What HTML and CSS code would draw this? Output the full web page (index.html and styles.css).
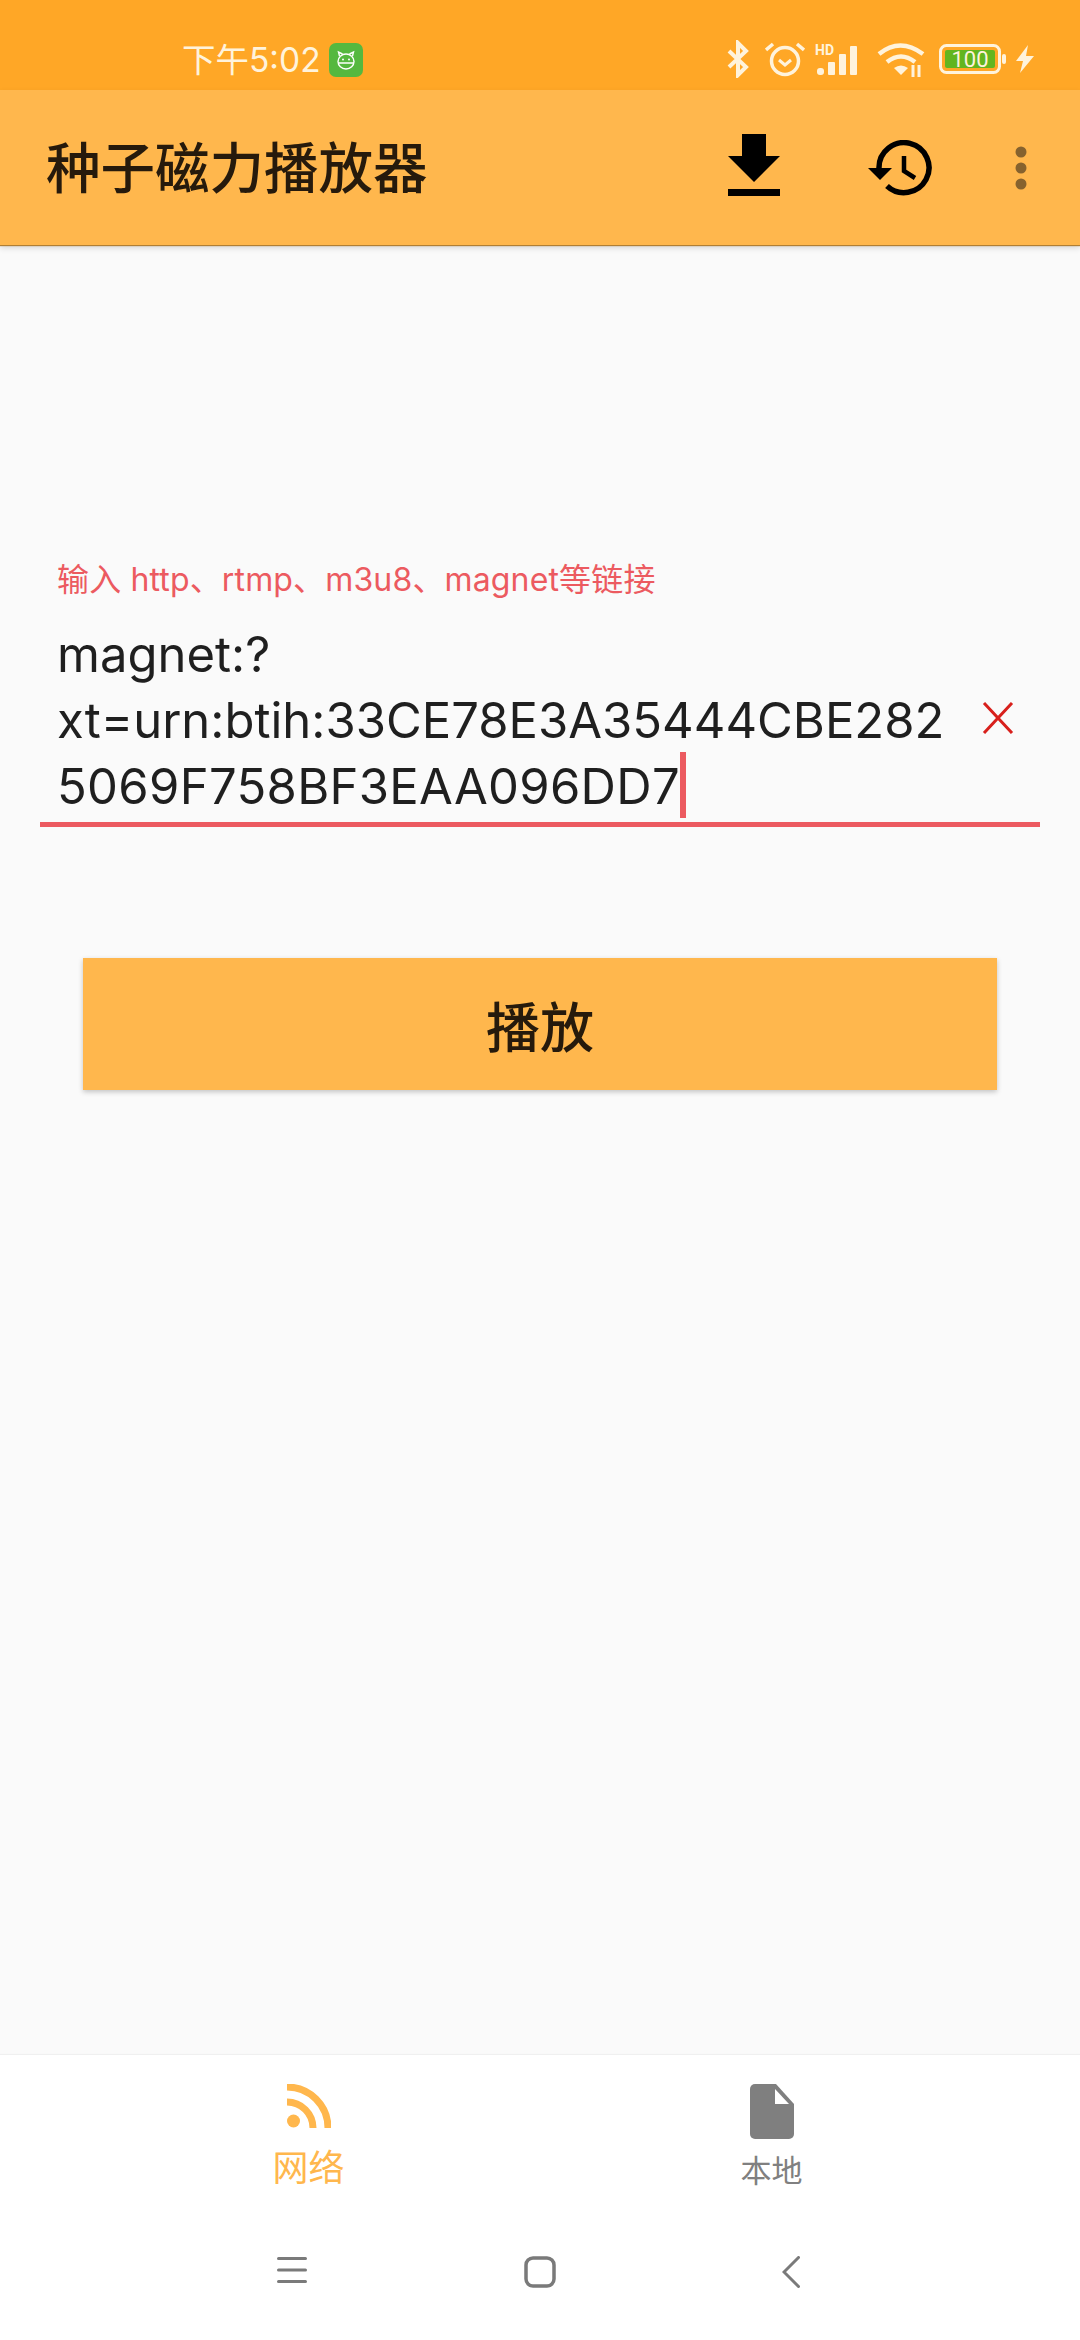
FILE: index.html
```html
<!DOCTYPE html>
<html lang="zh-CN">
<head>
<meta charset="utf-8">
<title>种子磁力播放器</title>
<link rel="stylesheet" href="styles.css">
</head>
<body>
<div class="screen">
  <header class="statusbar">
    <div class="status-left">
      <span class="time">下午5:02</span>
      <svg class="badge" width="34" height="34" viewBox="0 0 34 34"><rect width="34" height="34" rx="7" fill="#55B83F"/><g fill="none" stroke="#fff" stroke-width="1.4"><ellipse cx="17" cy="18.500" rx="8" ry="7.500"/><path d="M10.500 13l-1-4 4 2M23.500 13l1-4-4 2M9.500 20h15"/></g><circle cx="14" cy="16.500" r="1" fill="#fff"/><circle cx="20" cy="16.500" r="1" fill="#fff"/></svg>
    </div>
    <div class="status-right">
      <svg width="24" height="38" viewBox="0 0 24 38"><path d="M3 11l17 16-8 8V3l8 8L3 27" fill="none" stroke="#FFF3DC" stroke-width="4"/></svg>
      <svg class="s-alarm" width="40" height="36" viewBox="0 0 40 36"><g fill="none" stroke="#FFF3DC"><circle cx="20" cy="20" r="13.500" stroke-width="3.500"/><path d="M14 19l6 5 6-5" stroke-width="3"/><path d="M1 9l7-6M39 9l-7-6" stroke-width="3.500"/></g></svg>
      <svg class="s-signal" width="50" height="32" viewBox="0 0 50 32"><text x="0" y="12" class="hd">HD</text><g fill="#FFF3DC"><rect x="2" y="25" width="7" height="7" rx="3"/><rect x="13" y="19" width="7" height="13" rx="1"/><rect x="24" y="11" width="7" height="21" rx="1"/><rect x="35" y="3" width="7" height="29" rx="1"/></g></svg>
      <svg class="s-wifi" width="48" height="36" viewBox="0 0 48 36"><g fill="none" stroke="#FFF3DC" stroke-width="4.500"><path d="M2 13q21-17 44 0"/><path d="M10 21q14-11 28 0"/></g><path d="M17 27q7-5 14 0l-7 7z" fill="#FFF3DC"/><path d="M36 24v12M42 24v12" stroke="#FFF3DC" stroke-width="3"/></svg>
      <svg class="s-batt" width="68" height="30" viewBox="0 0 68 30"><rect x="1.500" y="1.500" width="59" height="27" rx="6" fill="none" stroke="#FFF3DC" stroke-width="3"/><rect x="6" y="6" width="50" height="18" rx="2" fill="#62B51F"/><rect x="63" y="10" width="4" height="10" rx="2" fill="#FFF3DC"/><text x="31" y="22.500" class="batt">100</text></svg>
      <svg class="s-bolt" width="20" height="28" viewBox="0 0 20 28"><path d="M13 0L1 16h7l-3 12L19 11h-8z" fill="#FFF3DC"/></svg>
    </div>
  </header>

  <div class="appbar">
    <h1 class="title">种子磁力播放器</h1>
    <div class="actions">
      <svg class="a-download" width="52" height="62" viewBox="0 0 52 62"><path d="M14 0h24v22h14L26 48 0 22h14zM0 55h52v7H0z"/></svg>
      <svg width="64" height="56" viewBox="0 0 64 56"><path d="M11 28A25 25 0 1 1 19 46" fill="none" stroke="#000" stroke-width="5.500"/><path d="M0 28h24L12 40z"/><path d="M36 16v15l11 7" fill="none" stroke="#000" stroke-width="4.500"/></svg>
      <svg class="a-more" width="12" height="44" viewBox="0 0 12 44"><g fill="#86622E"><circle cx="6" cy="6" r="5.500"/><circle cx="6" cy="22" r="5.500"/><circle cx="6" cy="38" r="5.500"/></g></svg>
    </div>
  </div>

  <main class="content">
    <label class="hint">输入 http、rtmp、m3u8、magnet等链接</label>
    <div class="field">
      <div class="value">
        <div>magnet:?</div>
        <div>xt=urn:btih:33CE78E3A35444CBE282</div>
        <div class="last">5069F758BF3EAA096DD7<span class="caret"></span></div>
      </div>
      <svg class="clear" width="32" height="32" viewBox="0 0 32 32"><path d="M2 1l28 30M30 1L2 31" stroke="#D8201C" stroke-width="3" fill="none"/></svg>
    </div>
    <button class="play">播放</button>
  </main>

  <nav class="tabs">
    <div class="tab active">
      <svg width="44" height="44" viewBox="0 0 44 44"><circle cx="6.500" cy="37" r="6.500" fill="#FFB74D"/><path d="M0 18a26 26 0 0 1 26 26M0 3a41 41 0 0 1 41 41" fill="none" stroke="#FFB74D" stroke-width="7"/></svg>
      <span>网络</span>
    </div>
    <div class="tab">
      <svg width="44" height="55" viewBox="0 0 44 55"><path d="M5 0h21l18 20v30a5 5 0 0 1-5 5H5a5 5 0 0 1-5-5V5a5 5 0 0 1 5-5z" fill="#7F7F7F"/><path d="M25 5l14 15H25z" fill="#fff"/></svg>
      <span>本地</span>
    </div>
  </nav>

  <footer class="navbar">
    <svg width="30" height="28" viewBox="0 0 30 28"><path d="M1.500 2.500h27M1.500 14h27M1.500 25.500h27" stroke="#7A7A7A" stroke-width="3" stroke-linecap="round"/></svg>
    <svg class="n-home" width="32" height="32" viewBox="0 0 32 32"><rect x="2" y="2" width="28" height="28" rx="7" fill="none" stroke="#7A7A7A" stroke-width="3.500"/></svg>
    <svg class="n-back" width="18" height="32" viewBox="0 0 18 32"><path d="M16.500 1.500L2 16l14.500 14.500" fill="none" stroke="#7A7A7A" stroke-width="3" stroke-linecap="round"/></svg>
  </footer>
</div>
</body>
</html>
```

FILE: styles.css
```css
* { box-sizing: border-box; }
html, body { margin: 0; padding: 0; }
body { font-family: "Inter", "Noto Sans CJK SC", sans-serif; background: #FAFAFA; }
.screen { width: 1080px; height: 2340px; display: flex; flex-direction: column; overflow: hidden; }

.statusbar { height: 90px; flex: none; background: #FFA726; display: flex; justify-content: space-between; align-items: flex-start; padding: 40px 45px 0 182px; color: #FFF3DC; }
.status-left { display: flex; align-items: center; gap: 9px; margin-top: 2px; }
.time { font-size: 33.5px; line-height: 36px; }
.badge { display: block; margin-left: -1px; }
.status-right { display: flex; align-items: center; }
.status-right svg { display: block; flex: none; }
.s-alarm { margin-left: 15px; }
.s-signal { margin-left: 10px; }
.s-wifi { margin-left: 12px; }
.s-batt { margin-left: 14px; }
.s-bolt { margin-left: 8px; }
.hd { font: 700 14px "Roboto", sans-serif; fill: #FFF3DC; }
.batt { font: 400 22px "Roboto", sans-serif; fill: #FFF3DC; text-anchor: middle; }

.appbar { height: 155px; flex: none; background: #FFB74D; display: flex; justify-content: space-between; align-items: center; padding: 0 53px 0 46px; box-shadow: 0 1px 1px #B07F35, 0 3px 6px rgba(0,0,0,.14); position: relative; z-index: 1; }
.title { margin: -6px 0 0; font-size: 54.5px; font-weight: 500; line-height: 64px; color: #261A0C; font-family: "Noto Sans CJK SC", sans-serif; }
.actions { display: flex; align-items: center; gap: 88px; }
.actions svg { display: block; flex: none; }
.a-download { margin-top: -5px; }
.a-more { margin-left: -5px; }

.content { flex: 1; display: flex; flex-direction: column; padding: 315px 40px 0; }
.hint { color: #EC5A60; font-size: 32px; line-height: 40px; padding-left: 17px; letter-spacing: .15px; }
.field { display: flex; align-items: flex-start; justify-content: space-between; border-bottom: 5px solid #EC5A60; margin-top: 8px; padding: 14px 26px 0 17px; height: 219px; }
.value { font-size: 49px; line-height: 66px; color: #1F1F1F; white-space: nowrap; }
.last { letter-spacing: .3px; }
.caret { display: inline-block; width: 6px; height: 66px; background: #EC5A60; vertical-align: top; margin-top: -2px; }
.clear { display: block; flex: none; margin-top: 80px; }
.play { display: block; margin: 131px 43px 0; height: 132px; border: 0; border-radius: 0; background: #FFB74D; box-shadow: 0 2px 5px rgba(0,0,0,.22); color: #261A0C; font-size: 54px; font-weight: 500; font-family: "Noto Sans CJK SC", sans-serif; }

.tabs { height: 165px; flex: none; background: #fff; display: flex; padding: 29px 0 0 0; box-shadow: 0 -1px 1px rgba(0,0,0,.04); justify-content: flex-start; }
.tab { display: flex; flex-direction: column; align-items: center; width: 463px; color: #808080; font-size: 31px; line-height: 40px; gap: 12px; }
.tab:first-child { margin-left: 77px; }
.tab svg { display: block; }
.tab.active { color: #FFB74D; font-size: 36px; line-height: 44px; gap: 18px; }

.navbar { height: 120px; flex: none; background: #fff; display: flex; align-items: flex-start; padding: 36px 0 0 277px; }
.navbar svg { display: block; }
.n-home { margin-left: 217px; }
.n-back { margin-left: 226px; }
```
